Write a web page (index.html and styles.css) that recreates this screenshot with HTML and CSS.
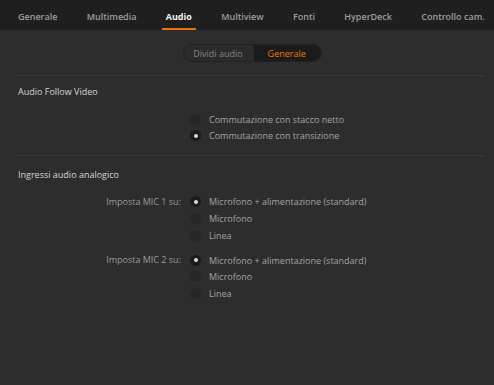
FILE: index.html
```html
<!DOCTYPE html>
<html lang="it">
<head>
    <meta charset="UTF-8">
    <title>Impostazioni Audio</title>
    <link rel="stylesheet" href="styles.css">
</head>
<body>
    <nav class="tabs">
        <span class="tab">Generale</span>
        <span class="tab">Multimedia</span>
        <span class="tab active">Audio</span>
        <span class="tab">Multiview</span>
        <span class="tab">Fonti</span>
        <span class="tab">HyperDeck</span>
        <span class="tab">Controllo cam.</span>
    </nav>

    <div class="toolbar">
        <div class="segmented">
            <span class="seg">Dividi audio</span>
            <span class="seg selected">Generale</span>
        </div>
    </div>

    <section class="group">
        <h2>Audio Follow Video</h2>
        <div class="setting">
            <span class="label"></span>
            <div class="options">
                <label class="radio"><span class="dot"></span>Commutazione con stacco netto</label>
                <label class="radio checked"><span class="dot"></span>Commutazione con transizione</label>
            </div>
        </div>
    </section>

    <section class="group">
        <h2 class="spaced">Ingressi audio analogico</h2>
        <div class="setting">
            <span class="label">Imposta MIC 1 su:</span>
            <div class="options">
                <label class="radio checked"><span class="dot"></span>Microfono + alimentazione (standard)</label>
                <label class="radio"><span class="dot"></span>Microfono</label>
                <label class="radio"><span class="dot"></span>Linea</label>
            </div>
        </div>
        <div class="setting">
            <span class="label">Imposta MIC 2 su:</span>
            <div class="options">
                <label class="radio checked"><span class="dot"></span>Microfono + alimentazione (standard)</label>
                <label class="radio"><span class="dot"></span>Microfono</label>
                <label class="radio"><span class="dot"></span>Linea</label>
            </div>
        </div>
    </section>
</body>
</html>
```

FILE: styles.css
```css
body {
    margin: 0;
    height: 385px;
    background-color: #2d2d2d;
    font-family: 'Open Sans', 'Noto Sans', sans-serif;
    font-size: 9px;
    color: #a8a8a8;
}

.tabs {
    display: flex;
    height: 30px;
    padding-left: 18px;
    gap: 29.3px;
    background-color: #1f1f1f;
    box-sizing: border-box;
}

.tab {
    display: flex;
    align-items: center;
    padding-top: 5px;
    box-sizing: border-box;
    white-space: nowrap;
    font-weight: 600;
    font-size: 9px;
    color: #9d9d9d;
    border-bottom: 2px solid transparent;
}

.tab.active {
    color: #f2f2f2;
    font-weight: 700;
    border-bottom-color: #e8740c;
    margin: 0 -4px;
    padding-left: 4px;
    padding-right: 4px;
}

.toolbar {
    display: flex;
    justify-content: center;
    padding: 14px 0 13px 11px;
}

.segmented {
    display: flex;
    height: 18px;
    border-radius: 9px;
    border: 1px solid #222;
    background-color: #2b2b2b;
    overflow: hidden;
    box-sizing: border-box;
}

.seg {
    display: flex;
    align-items: center;
    padding: 0 11px 0 9px;
    color: #858585;
}

.seg.selected {
    background-color: #1b1b1b;
    color: #e57a10;
    padding: 0 15px 0 14px;
}

.group {
    margin: 0 9px 0 18px;
    border-top: 1px solid #393939;
    padding-bottom: 2px;
}

.group h2 {
    margin: 0;
    padding: 9px 0 13px;
    font-size: 9px;
    font-weight: 400;
    color: #d6d6d6;
}

.group h2.spaced {
    padding-top: 12px;
}

.setting {
    display: flex;
    margin-bottom: 8.5px;
}

.label {
    width: 163px;
    text-align: right;
    padding-right: 9px;
    line-height: 16.6px;
    color: #9a9a9a;
}

.options {
    display: flex;
    flex-direction: column;
}

.radio {
    display: flex;
    align-items: center;
    height: 16.6px;
    gap: 8px;
    color: #a4a4a4;
}

.dot {
    width: 11px;
    height: 11px;
    border-radius: 50%;
    background-color: #262626;
    display: flex;
    align-items: center;
    justify-content: center;
}

.radio.checked .dot {
    background-color: #1b1b1b;
}

.radio.checked .dot::after {
    content: "";
    width: 4px;
    height: 4px;
    border-radius: 50%;
    background-color: #dcdcdc;
}
```
